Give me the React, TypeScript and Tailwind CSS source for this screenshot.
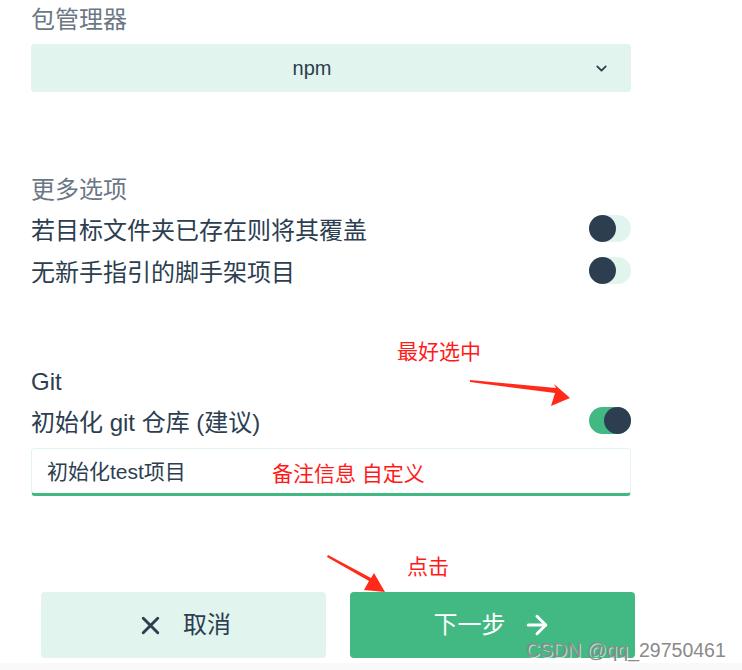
import React from "react";
import { ChevronDown, X, ArrowRight } from "lucide-react";

const font = { fontFamily: '"Liberation Sans", "Noto Sans CJK SC", sans-serif' };

const Toggle = ({ on }: { on?: boolean }) => (
  <div className={`-mt-[5px] flex h-[27px] w-[42px] rounded-full ${on ? "justify-end bg-[#42b883]" : "justify-start bg-[#e2f4ee]"}`}>
    <div className="h-[27px] w-[27px] rounded-full bg-[#2c3e50]" />
  </div>
);

const SwitchRow = ({ label, on }: { label: string; on?: boolean }) => (
  <div className="flex h-[42px] items-center justify-between text-[24px] text-[#2c3e50]">
    <span>{label}</span>
    <Toggle on={on} />
  </div>
);

const App = () => {
  return (
    <div className="relative h-[670px] w-[742px] overflow-hidden bg-white" style={font}>
      <div className="ml-[31px] w-[600px]">
        <div className="h-[40px] text-[24px] leading-[40px] text-[#6b7785]">包管理器</div>
        <div className="mt-[4px] flex h-[48px] items-center rounded bg-[#e2f4ee] text-[20px] text-[#2c3e50]">
          <span className="flex-1 text-center">npm</span>
          <ChevronDown className="mr-[21px] h-[17px] w-[17px]" strokeWidth={2.5} />
        </div>

        <div className="mt-[78px] h-[40px] text-[24px] leading-[40px] text-[#6b7785]">更多选项</div>
        <SwitchRow label="若目标文件夹已存在则将其覆盖" />
        <SwitchRow label="无新手指引的脚手架项目" />

        <div className="mt-[68px] h-[40px] text-[24px] leading-[40px] text-[#2c3e50]">Git</div>
        <SwitchRow label="初始化 git 仓库 (建议)" on />
        <div className="mt-[4px] flex h-[48px] items-center rounded border border-b-[3px] border-[#e2f4ee] border-b-[#42b883] px-[15px] pt-[2px] text-[21px] text-[#2c3e50]">
          初始化test项目
        </div>
      </div>

      <div className="ml-[41px] mt-[96px] flex gap-[24px] text-[24px]">
        <button className="flex h-[66px] w-[285px] items-center justify-center gap-[18px] rounded bg-[#e2f4ee] text-[#2c3e50]">
          <X className="h-[29px] w-[29px]" strokeWidth={2.4} />
          <span>取消</span>
        </button>
        <button className="flex h-[66px] w-[285px] items-center justify-center gap-[16px] rounded bg-[#42b883] text-white">
          <span>下一步</span>
          <ArrowRight className="h-[30px] w-[30px]" strokeWidth={2.4} />
        </button>
      </div>
      <div className="mt-[5px] h-[10px] bg-[#f9f9f9]" />

      {/* annotations */}
      <div className="absolute left-[397px] top-[336px] text-[21px] text-[#ff1a1a]">最好选中</div>
      <div className="absolute left-[272px] top-[458px] text-[21px] text-[#ff1a1a]">备注信息 自定义</div>
      <div className="absolute left-[407px] top-[551px] text-[21px] text-[#ff1a1a]">点击</div>
      <svg className="pointer-events-none absolute left-0 top-0" width="742" height="670">
        <polygon points="470,380 556,388 554,384 570,398 551,406 555,393 470,382" fill="#ff2a1a" />
        <polygon points="328,555 371,578 374,573 385,592 364,590 369,581 327,557" fill="#ff2a1a" />
      </svg>
      <div
        className="absolute left-[526px] top-[636px] text-[19.5px] text-[#8a8a8a]"
        style={{ textShadow: "1px 1px 0 rgba(255,255,255,0.6)" }}
      >
        CSDN @qq_29750461
      </div>
    </div>
  );
};

export default App;
